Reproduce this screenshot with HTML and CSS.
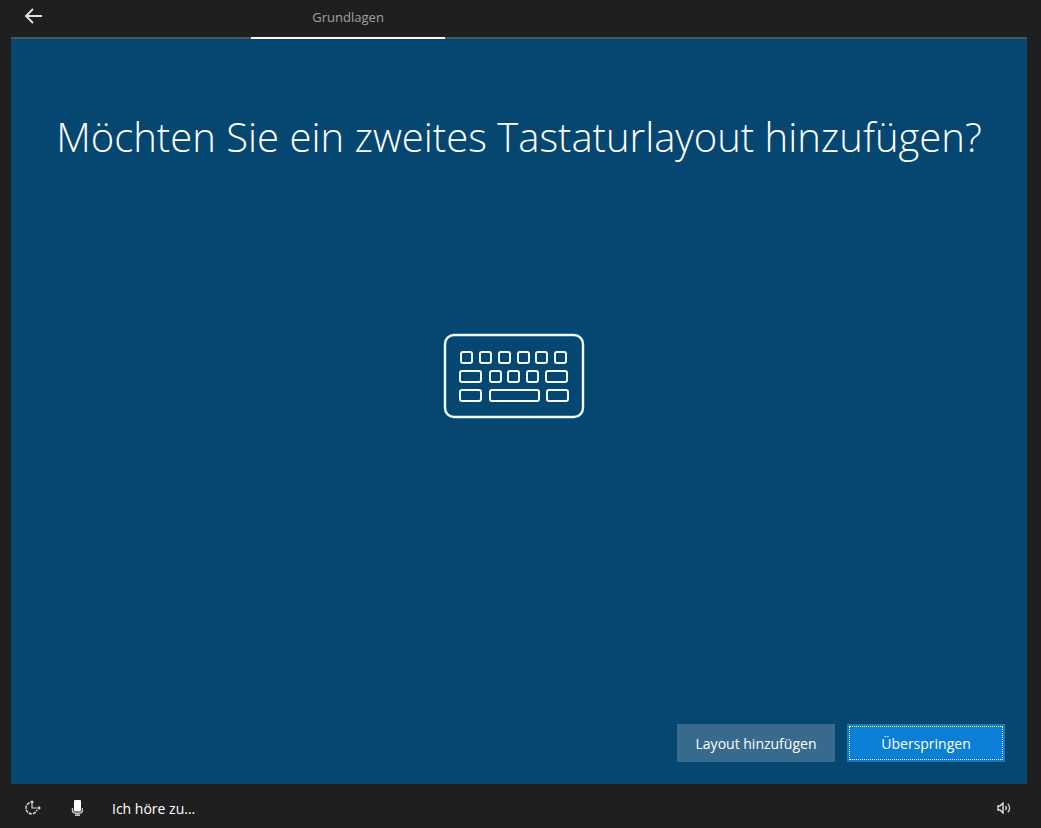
FILE: index.html
```html
<!DOCTYPE html>
<html lang="de">
<head>
<meta charset="utf-8">
<meta name="viewport" content="width=device-width, initial-scale=1">
<title>Tastaturlayout</title>
<link rel="stylesheet" href="styles.css">
</head>
<body>
<header class="topbar">
  <button class="icon-button back" type="button" aria-label="Zurück">
    <svg width="20" height="18" viewBox="0 0 20 18" fill="none" stroke="#e4e2e4" stroke-width="1.900"><path d="M19 9H3M10 2L3 9l7 7"/></svg>
  </button>
  <nav class="steps">
    <a class="step" href="#grundlagen" aria-current="step">Grundlagen</a>
  </nav>
</header>
<main class="panel" id="grundlagen">
  <h1 class="title">Möchten Sie ein zweites Tastaturlayout hinzufügen?</h1>
  <div class="hero">
    <svg width="142" height="86" viewBox="0 0 142 86" fill="none" stroke="#f0faff" stroke-width="2" aria-hidden="true">
      <rect x="2" y="2" width="138" height="82" rx="9" stroke-width="2.400"/>
      <rect x="18" y="19" width="11" height="11" rx="2"/>
      <rect x="37" y="19" width="11" height="11" rx="2"/>
      <rect x="56" y="19" width="11" height="11" rx="2"/>
      <rect x="75" y="19" width="11" height="11" rx="2"/>
      <rect x="93" y="19" width="11" height="11" rx="2"/>
      <rect x="112" y="19" width="11" height="11" rx="2"/>
      <rect x="17" y="38" width="21" height="11" rx="2"/>
      <rect x="47" y="38" width="11" height="11" rx="2"/>
      <rect x="65" y="38" width="11" height="11" rx="2"/>
      <rect x="84" y="38" width="11" height="11" rx="2"/>
      <rect x="103" y="38" width="21" height="11" rx="2"/>
      <rect x="17" y="57" width="21" height="11" rx="2"/>
      <rect x="47" y="57" width="49" height="11" rx="2"/>
      <rect x="104" y="57" width="21" height="11" rx="2"/>
    </svg>
  </div>
  <div class="actions">
    <button class="button" type="button">Layout hinzufügen</button>
    <button class="button primary" type="button">Überspringen</button>
  </div>
</main>
<footer class="bottombar">
  <button class="icon-button" type="button" aria-label="Erleichterte Bedienung">
    <svg width="18" height="16" viewBox="0 0 18 16" fill="none" stroke="#d8d2da" stroke-width="1.500"><path d="M5.500 2.800A5.700 5.700 0 1 0 13 10" stroke-dasharray="3.200 1"/><path d="M8 1v7h8M6.500 2.500L8 1l1.500 1.500M14.500 6.500L16 8l-1.500 1.500" stroke-width="1.200"/></svg>
  </button>
  <button class="icon-button" type="button" aria-label="Mikrofon">
    <svg width="12" height="16" viewBox="0 0 12 16" fill="none" stroke="#c8c8c8" stroke-width="1.400"><path d="M1.500 8v2.500a3 3 0 0 0 3 2.700h4a3 3 0 0 0 3-2.700V8M6.500 13v2.300M4 15.200h5"/><rect x="3" y="0" width="7" height="11.500" rx="1" fill="#fff" stroke="none"/></svg>
  </button>
  <p class="status">Ich höre zu...</p>
  <button class="icon-button volume" type="button" aria-label="Lautstärke">
    <svg width="14" height="12" viewBox="0 0 14 12" fill="none" stroke="#e2dfe2" stroke-width="1.400"><path d="M1 4h2l3-3v10L3 8H1z"/><path d="M8.500 4a3 3 0 0 1 0 4M10.800 1.700a6 6 0 0 1 0 8.600" stroke="#cfc6cd"/></svg>
  </button>
</footer>
</body>
</html>
```
FILE: styles.css
```css
* {
  box-sizing: border-box;
}

body {
  margin: 0;
  min-height: 100vh;
  display: flex;
  flex-direction: column;
  background: #1f1f1f;
  color: #fff;
  font-family: "Segoe UI", "Open Sans", "Noto Sans", sans-serif;
  font-size: 14px;
  line-height: 20px;
}

.topbar {
  display: grid;
  grid-template-columns: 26fr 84fr;
  margin: 0 14px 0 11px;
  height: 39px;
  background: linear-gradient(#455761, #455761) bottom / 100% 2px no-repeat;
}

.icon-button {
  display: flex;
  align-items: center;
  justify-content: center;
  width: 44px;
  height: 32px;
  padding: 0;
  border: 0;
  background: none;
}

.steps {
  display: flex;
}

.step {
  width: 25%;
  padding: 7px 0 10px;
  border-bottom: 2px solid #fff;
  color: #a0a0a0;
  font-size: 13px;
  text-align: center;
  text-decoration: none;
}

.panel {
  flex: 1;
  display: flex;
  flex-direction: column;
  margin: 0 14px 0 11px;
  padding: 70px 22px 22px;
  background: #064771;
}

.title {
  margin: 0;
  font-size: 40px;
  line-height: 56px;
  font-weight: 300;
  text-align: center;
  white-space: nowrap;
}

.hero {
  flex: 1;
  display: flex;
  justify-content: center;
  padding: 168px 10px 0 0;
}

.actions {
  display: flex;
  justify-content: flex-end;
  gap: 12px;
}

.button {
  width: 158px;
  height: 38px;
  padding: 2px 0 0;
  border: 0;
  background: #386a8e;
  color: #fff;
  font: inherit;
}

.primary {
  background: #0a7fd5;
  border: 2px solid #1a78bd;
  outline: 1px dotted #e8f6ff;
  outline-offset: -3px;
}

.bottombar {
  display: flex;
  align-items: center;
  height: 44px;
  padding: 4px 15px 0 11px;
}

.status {
  margin: 0 0 0 13px;
  padding-top: 2px;
}

.volume {
  margin-left: auto;
}
```
